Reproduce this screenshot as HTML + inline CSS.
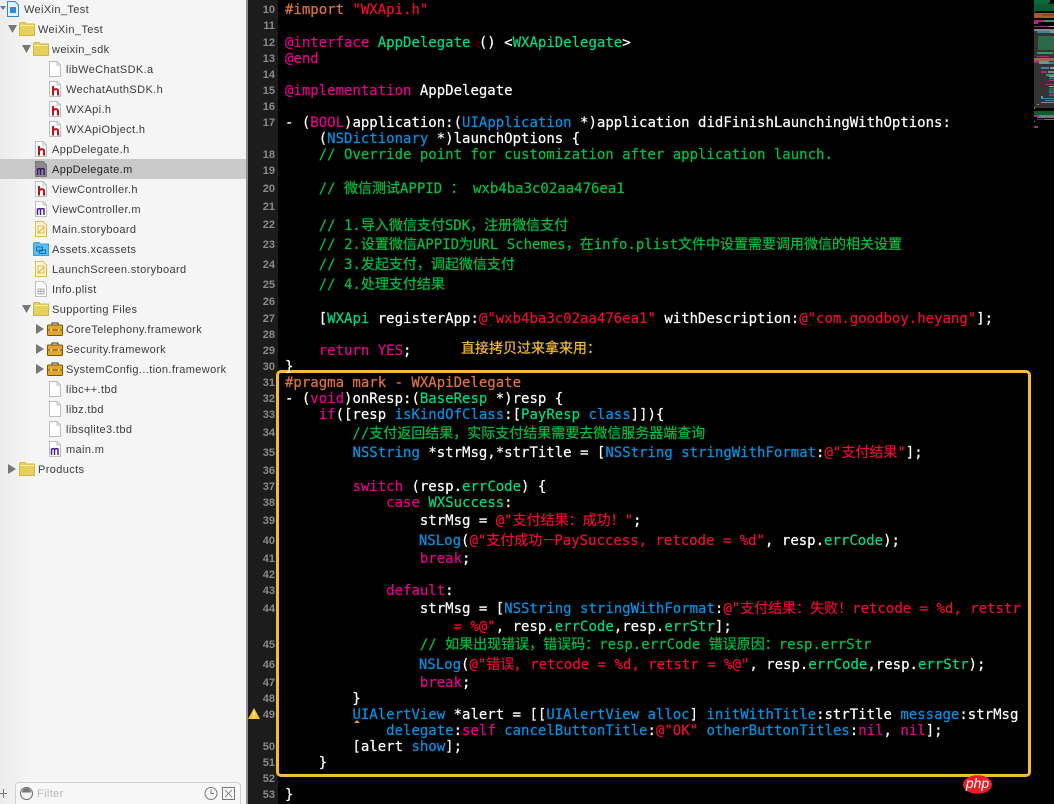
<!DOCTYPE html>
<html><head><meta charset="utf-8">
<style>
html,body{margin:0;padding:0;background:#000}
#p{position:relative;width:1054px;height:804px;overflow:hidden;background:#000}
#side{position:absolute;left:0;top:0;width:246px;height:804px;background:linear-gradient(90deg,#ececec 0,#f5f5f5 30px)}
#sel{position:absolute;left:0;top:159px;width:246px;height:20px;background:#c9c9c9}
#div{position:absolute;left:246px;top:0;width:2px;height:804px;background:#8f8f8f}
#gut{position:absolute;left:248px;top:0;width:30px;height:804px;background:#1c1c1c}
.r{position:absolute;margin-top:1px;font:11px/20px "Liberation Sans",sans-serif;letter-spacing:.37px;color:#3a3a3a;white-space:pre}
.n{position:absolute;margin-top:1px;left:248px;width:27px;text-align:right;font:bold 11px/14px "Liberation Sans",sans-serif;color:#8a8a8a}
.l{position:absolute;margin-top:1px;left:285px;font:14px/16px "DejaVu Sans Mono","Noto Sans CJK SC",monospace;color:#fff;white-space:pre;-webkit-text-stroke:.2px}
.k{color:#e4008c}.g{color:#00d97e}.b{color:#0094e6}.c{color:#00c040}.s{color:#f00a32}.o{color:#e0743c}
#box{position:absolute;left:276px;top:370px;width:749px;height:401px;border:3px solid #f5bd2e;border-radius:5px}
svg.a{position:absolute;overflow:visible}
</style></head><body><div id="p">
<div id="side"></div><div id="sel"></div><div id="div"></div><div id="gut"></div>

<svg width="0" height="0" style="position:absolute">
<defs>
<symbol id="fo" viewBox="0 0 16 14"><path d="M.5 2.500Q.5 .5 2 .5H6L7.500 2H15.500V13.500H.5Z" fill="#e6d05c" stroke="#d0b845"/><path d="M1 3H15V4H1Z" fill="#fff0a0"/></symbol>
<symbol id="fi" viewBox="0 0 12 16"><path d="M.5 .5H8L11.500 4V15.500H.5Z" fill="#fff" stroke="#bdbdbd"/><path d="M8 .5V4H11.500" fill="none" stroke="#bdbdbd"/></symbol>
<symbol id="fh" viewBox="0 0 12 16"><path d="M.5 .5H8L11.500 4V15.500H.5Z" fill="#fff" stroke="#bdbdbd"/><path d="M8 .5V4H11.500" fill="none" stroke="#bdbdbd"/><path d="M4 5V14.500M4 9.500Q5.500 8 7.500 8.200Q9 8.500 9 10V14.500" fill="none" stroke="#c0101c" stroke-width="2"/></symbol>
<symbol id="fm" viewBox="0 0 12 16"><path d="M.5 .5H8L11.500 4V15.500H.5Z" fill="#fff" stroke="#bdbdbd"/><path d="M8 .5V4H11.500" fill="none" stroke="#bdbdbd"/><path d="M2.500 7.500V14M2.500 8.500Q4 7 5.500 8V14M5.500 8.500Q7 7 9 8V14" fill="none" stroke="#4a1a90" stroke-width="1.500"/></symbol>
<symbol id="fmd" viewBox="0 0 12 16"><path d="M.5 .5H8L11.500 4V15.500H.5Z" fill="#8a8a8a" stroke="#777"/><path d="M2.500 7.500V14M2.500 8.500Q4 7 5.500 8V14M5.500 8.500Q7 7 9 8V14" fill="none" stroke="#3a1470" stroke-width="1.500"/></symbol>
<symbol id="fs" viewBox="0 0 12 16"><path d="M.5 .5H8L11.500 4V15.500H.5Z" fill="#fff8dc" stroke="#e3b84a"/><path d="M3 5H9V12H3Z" fill="none" stroke="#e5b53a"/><path d="M3 12L9 6" stroke="#e5a52a"/></symbol>
<symbol id="fp" viewBox="0 0 12 16"><path d="M.5 .5H8L11.500 4V15.500H.5Z" fill="#fff" stroke="#bdbdbd"/><path d="M3 8H9V13H3ZM3 10.500H9M6 8V13" fill="none" stroke="#aaa"/></symbol>
<symbol id="fw" viewBox="0 0 16 14"><path d="M5 3V1H11V3" fill="none" stroke="#3b2c14"/><rect x=".5" y="3" width="15" height="10.500" rx="1" fill="#e3a52a" stroke="#7a5210"/><path d="M1 8H15" stroke="#7a5210"/><path d="M3.500 7H5V9H3.500ZM11 7H12.500V9H11Z" fill="#ffe9a0"/></symbol>
<symbol id="fa" viewBox="0 0 16 14"><path d="M.5 2.500Q.5 .5 2 .5H6L7.500 2H15.500V13.500H.5Z" fill="#5ac0f2" stroke="#3aa0dc"/><path d="M3.500 5H9.500V9H3.500ZM6.500 8H12.500V11.500H6.500Z" fill="none" stroke="#136fae"/></symbol>
</defs></svg>

<!-- sidebar rows -->
<svg class="a" style="left:0;top:6px" width="6" height="6"><path d="M0 0H6L3 4Z" fill="#777"/></svg>
<svg class="a" style="left:7px;top:1px" width="12" height="16"><path d="M.5 .5H8L11.500 4V15.500H.5Z" fill="#e4f1fc" stroke="#2a8ae0"/><path d="M3 6H9V12H3Z" fill="#2a8ae0"/></svg>
<div class="r" style="left:24px;top:-1px">WeiXin_Test</div>

<svg class="a" style="left:8px;top:25px" width="9" height="8"><path d="M0 0H9L4.500 8Z" fill="#777"/></svg>
<svg class="a" style="left:19px;top:22px" width="16" height="14"><use href="#fo"/></svg>
<div class="r" style="left:38px;top:19px">WeiXin_Test</div>

<svg class="a" style="left:22px;top:45px" width="9" height="8"><path d="M0 0H9L4.500 8Z" fill="#777"/></svg>
<svg class="a" style="left:33px;top:42px" width="16" height="14"><use href="#fo"/></svg>
<div class="r" style="left:52px;top:39px">weixin_sdk</div>

<svg class="a" style="left:49px;top:61px" width="12" height="16"><use href="#fi"/></svg>
<div class="r" style="left:66px;top:59px">libWeChatSDK.a</div>
<svg class="a" style="left:49px;top:81px" width="12" height="16"><use href="#fh"/></svg>
<div class="r" style="left:66px;top:79px">WechatAuthSDK.h</div>
<svg class="a" style="left:49px;top:101px" width="12" height="16"><use href="#fh"/></svg>
<div class="r" style="left:66px;top:99px">WXApi.h</div>
<svg class="a" style="left:49px;top:121px" width="12" height="16"><use href="#fh"/></svg>
<div class="r" style="left:66px;top:119px">WXApiObject.h</div>

<svg class="a" style="left:35px;top:141px" width="12" height="16"><use href="#fh"/></svg>
<div class="r" style="left:52px;top:139px">AppDelegate.h</div>
<svg class="a" style="left:35px;top:161px" width="12" height="16"><use href="#fmd"/></svg>
<div class="r" style="left:52px;top:159px;color:#222">AppDelegate.m</div>
<svg class="a" style="left:35px;top:181px" width="12" height="16"><use href="#fh"/></svg>
<div class="r" style="left:52px;top:179px">ViewController.h</div>
<svg class="a" style="left:35px;top:201px" width="12" height="16"><use href="#fm"/></svg>
<div class="r" style="left:52px;top:199px">ViewController.m</div>
<svg class="a" style="left:35px;top:221px" width="12" height="16"><use href="#fs"/></svg>
<div class="r" style="left:52px;top:219px">Main.storyboard</div>
<svg class="a" style="left:33px;top:242px" width="16" height="14"><use href="#fa"/></svg>
<div class="r" style="left:52px;top:239px">Assets.xcassets</div>
<svg class="a" style="left:35px;top:261px" width="12" height="16"><use href="#fs"/></svg>
<div class="r" style="left:52px;top:259px">LaunchScreen.storyboard</div>
<svg class="a" style="left:35px;top:281px" width="12" height="16"><use href="#fp"/></svg>
<div class="r" style="left:52px;top:279px">Info.plist</div>

<svg class="a" style="left:22px;top:305px" width="9" height="8"><path d="M0 0H9L4.500 8Z" fill="#777"/></svg>
<svg class="a" style="left:33px;top:302px" width="16" height="14"><use href="#fo"/></svg>
<div class="r" style="left:52px;top:299px">Supporting Files</div>

<svg class="a" style="left:36px;top:324px" width="8" height="10"><path d="M0 0L8 5L0 10Z" fill="#777"/></svg>
<svg class="a" style="left:47px;top:322px" width="16" height="14"><use href="#fw"/></svg>
<div class="r" style="left:66px;top:319px">CoreTelephony.framework</div>
<svg class="a" style="left:36px;top:344px" width="8" height="10"><path d="M0 0L8 5L0 10Z" fill="#777"/></svg>
<svg class="a" style="left:47px;top:342px" width="16" height="14"><use href="#fw"/></svg>
<div class="r" style="left:66px;top:339px">Security.framework</div>
<svg class="a" style="left:36px;top:364px" width="8" height="10"><path d="M0 0L8 5L0 10Z" fill="#777"/></svg>
<svg class="a" style="left:47px;top:362px" width="16" height="14"><use href="#fw"/></svg>
<div class="r" style="left:66px;top:359px">SystemConfig...tion.framework</div>

<svg class="a" style="left:49px;top:381px" width="12" height="16"><use href="#fi"/></svg>
<div class="r" style="left:66px;top:379px">libc++.tbd</div>
<svg class="a" style="left:49px;top:401px" width="12" height="16"><use href="#fi"/></svg>
<div class="r" style="left:66px;top:399px">libz.tbd</div>
<svg class="a" style="left:49px;top:421px" width="12" height="16"><use href="#fi"/></svg>
<div class="r" style="left:66px;top:419px">libsqlite3.tbd</div>
<svg class="a" style="left:49px;top:441px" width="12" height="16"><use href="#fm"/></svg>
<div class="r" style="left:66px;top:439px">main.m</div>

<svg class="a" style="left:8px;top:464px" width="8" height="10"><path d="M0 0L8 5L0 10Z" fill="#777"/></svg>
<svg class="a" style="left:19px;top:462px" width="16" height="14"><use href="#fo"/></svg>
<div class="r" style="left:38px;top:459px">Products</div>

<!-- filter bar -->
<svg class="a" style="left:0;top:783px" width="246" height="21">
<path d="M0 10.500H7M3.500 6V15" stroke="#777" fill="none"/>
<rect x="15.500" y="-.5" width="225" height="25" rx="3" fill="#f7f7f7" stroke="#cfcfcf"/>
<circle cx="26.500" cy="10.500" r="6" fill="#f7f7f7" stroke="#777" stroke-width="1.200"/>
<path d="M22 9.500A4.500 4.500 0 0 1 31 9.500Z" fill="#777"/>
<circle cx="211" cy="10.500" r="6" fill="none" stroke="#777"/>
<path d="M211 6.500V10.500H214" fill="none" stroke="#777"/>
<rect x="222.500" y="4.500" width="12" height="12" fill="none" stroke="#777"/>
<path d="M225 7L232 14M232 7L225 14" stroke="#888"/>
</svg>
<div class="r" style="left:37px;top:783px;color:#b5b5b5">Filter</div>

<!-- gutter numbers -->
<div class="n" style="top:2px">10</div><div class="n" style="top:18px">11</div><div class="n" style="top:35px">12</div><div class="n" style="top:51px">13</div><div class="n" style="top:67px">14</div><div class="n" style="top:83px">15</div><div class="n" style="top:99px">16</div><div class="n" style="top:115px">17</div><div class="n" style="top:147px">18</div><div class="n" style="top:163px">19</div><div class="n" style="top:181px">20</div><div class="n" style="top:199px">21</div><div class="n" style="top:217px">22</div><div class="n" style="top:237px">23</div><div class="n" style="top:257px">24</div><div class="n" style="top:277px">25</div><div class="n" style="top:294px">26</div><div class="n" style="top:311px">27</div><div class="n" style="top:327px">28</div><div class="n" style="top:343px">29</div><div class="n" style="top:359px">30</div><div class="n" style="top:375px">31</div><div class="n" style="top:391px">32</div><div class="n" style="top:407px">33</div><div class="n" style="top:425px">34</div><div class="n" style="top:445px">35</div><div class="n" style="top:463px">36</div><div class="n" style="top:479px">37</div><div class="n" style="top:495px">38</div><div class="n" style="top:513px">39</div><div class="n" style="top:533px">40</div><div class="n" style="top:551px">41</div><div class="n" style="top:567px">42</div><div class="n" style="top:583px">43</div><div class="n" style="top:601px">44</div><div class="n" style="top:637px">45</div><div class="n" style="top:657px">46</div><div class="n" style="top:675px">47</div><div class="n" style="top:691px">48</div><div class="n" style="top:707px">49</div><div class="n" style="top:739px">50</div><div class="n" style="top:755px">51</div><div class="n" style="top:771px">52</div><div class="n" style="top:787px">53</div>
<svg class="a" style="left:248px;top:708px" width="12" height="11"><path d="M6 0L12 11H0Z" fill="#f7c325"/><path d="M6 3.500V7.500M6 8.500V10" stroke="#fff" stroke-width="1.200"/></svg>

<div id="box"></div>

<!-- code -->
<div class="l" style="top:1px"><span class="o">#import </span><span class="s">"WXApi.h"</span></div>
<div class="l" style="top:34px"><span class="k">@interface</span> <span class="g">AppDelegate</span> () &lt;<span class="g">WXApiDelegate</span>&gt;</div>
<div class="l" style="top:50px"><span class="k">@end</span></div>
<div class="l" style="top:82px"><span class="k">@implementation</span> AppDelegate</div>
<div class="l" style="top:114px">- (<span class="k">BOOL</span>)application:(<span class="b">UIApplication</span> *)application didFinishLaunchingWithOptions:</div>
<div class="l" style="top:130px">    (<span class="b">NSDictionary</span> *)launchOptions {</div>
<div class="l c" style="top:146px">    // Override point for customization after application launch.</div>
<div class="l c" style="top:180px">    // 微信测试APPID ： wxb4ba3c02aa476ea1</div>
<div class="l c" style="top:217px">    // 1.导入微信支付SDK，注册微信支付</div>
<div class="l c" style="top:236px">    // 2.设置微信APPID为URL Schemes，在info.plist文件中设置需要调用微信的相关设置</div>
<div class="l c" style="top:256px">    // 3.发起支付，调起微信支付</div>
<div class="l c" style="top:276px">    // 4.处理支付结果</div>
<div class="l" style="top:310px">    [<span class="g">WXApi</span> registerApp:<span class="s">@"wxb4ba3c02aa476ea1"</span> withDescription:<span class="s">@"com.goodboy.heyang"</span>];</div>
<div class="l" style="top:342px">    <span class="k">return</span> <span class="k">YES</span>;</div>
<div class="l" style="top:339px;left:461px;color:#f5bd2e;font-family:'Liberation Sans','Noto Sans CJK SC',sans-serif">直接拷贝过来拿来用：</div>
<div class="l" style="top:358px">}</div>
<div class="l" style="top:374px"><span class="o">#pragma mark - WXApiDelegate</span></div>
<div class="l" style="top:390px">- (<span class="k">void</span>)onResp:(<span class="g">BaseResp</span> *)resp {</div>
<div class="l" style="top:406px">    <span class="k">if</span>([resp <span class="b">isKindOfClass</span>:[<span class="g">PayResp</span> <span class="b">class</span>]]){</div>
<div class="l c" style="top:425px">        //支付返回结果，实际支付结果需要去微信服务器端查询</div>
<div class="l" style="top:444px">        <span class="b">NSString</span> *strMsg,*strTitle = [<span class="b">NSString</span> <span class="b">stringWithFormat</span>:<span class="s">@"支付结果"</span>];</div>
<div class="l" style="top:478px">        <span class="k">switch</span> (resp.<span class="g">errCode</span>) {</div>
<div class="l" style="top:494px">            <span class="k">case</span> <span class="g">WXSuccess</span>:</div>
<div class="l" style="top:512px">                strMsg = <span class="s">@"支付结果：成功！"</span>;</div>
<div class="l" style="top:532px;left:284px">                <span class="b">NSLog</span>(<span class="s">@"支付成功－<span style="margin-left:-2px">PaySuccess, retcode = %d"</span></span>, resp.<span class="g">errCode</span>);</div>
<div class="l" style="top:550px">                <span class="k">break</span>;</div>
<div class="l" style="top:582px">            <span class="k">default</span>:</div>
<div class="l" style="top:600px">                strMsg = [<span class="b">NSString</span> <span class="b">stringWithFormat</span>:<span class="s">@"支付结果：失败！retcode = %d, retstr</span></div>
<div class="l" style="top:618px">                    <span class="s">= %@"</span>, resp.<span class="g">errCode</span>,resp.<span class="g">errStr</span>];</div>
<div class="l c" style="top:636px">                // 如果出现错误，错误码：resp.errCode 错误原因：resp.errStr</div>
<div class="l" style="top:656px;left:284px">                <span class="b">NSLog</span>(<span class="s">@"错误<span style="margin-left:-1px">, retcode = %d, retstr = %@"</span></span>, resp.<span class="g">errCode</span>,resp.<span class="g">errStr</span>);</div>
<div class="l" style="top:674px">                <span class="k">break</span>;</div>
<div class="l" style="top:690px">        }</div>
<div class="l" style="top:706px">        <span class="b">UIAlertView</span> *alert = [[<span class="b">UIAlertView</span> <span class="b">alloc</span>] <span class="b">initWithTitle</span>:strTitle <span class="b">message</span>:strMsg</div>
<div class="l" style="top:722px">            <span class="b">delegate</span>:<span class="k">self</span> <span class="b">cancelButtonTitle</span>:<span class="s">@"OK"</span> <span class="b">otherButtonTitles</span>:<span class="k">nil</span>, <span class="k">nil</span>];</div>
<div class="l" style="top:738px">        [alert <span class="b">show</span>];</div>
<div class="l" style="top:754px">    }</div>
<div class="l" style="top:786px">}</div>

<svg class="a" style="left:354px;top:720px" width="6" height="3"><path d="M0 3L3 0L6 3Z" fill="#e0a030"/></svg>

<!-- minimap -->
<svg class="a" style="left:1034px;top:0" width="20" height="135" shape-rendering="crispEdges">
<rect y="0" width="16" height="3" fill="#0b6a35"/><rect y="3" width="14" height="1" fill="#0b6a35"/>
<rect y="4" width="20" height="7" fill="#0d5c30"/><rect y="11" width="2" height="1" fill="#0d5c30"/>
<rect y="13" width="20" height="5" fill="#a45a35"/><rect x="8" y="14" width="12" height="2" fill="#a43c30"/>
<rect y="29" width="20" height="79" fill="#333"/>
<rect y="20" width="10" height="2" fill="#a52a80"/><rect x="10" y="20" width="10" height="2" fill="#2e9a6a"/>
<rect y="22" width="4" height="2" fill="#a52a80"/>
<rect y="26" width="15" height="1" fill="#a52a80"/><rect x="15" y="26" width="5" height="1" fill="#aaa"/>
<rect y="29" width="20" height="2" fill="#888"/><rect x="3" y="31" width="13" height="2" fill="#2a8aa8"/><rect x="16" y="31" width="4" height="2" fill="#999"/>
<rect x="4" y="36" width="16" height="14" fill="#2a6a48"/>
<rect x="3" y="52" width="16" height="2" fill="#2e9a6a"/>
<rect x="3" y="56" width="12" height="1" fill="#a52a80"/>
<rect y="58" width="20" height="3" fill="#a4654a"/>
<rect y="61" width="6" height="2" fill="#a52a80"/><rect x="5" y="61" width="10" height="3" fill="#888"/><rect x="15" y="62" width="5" height="2" fill="#2a8aa8"/>
<rect x="7" y="67" width="8" height="2" fill="#2a8aa8"/><rect x="16" y="67" width="4" height="2" fill="#999"/>
<rect x="7" y="71" width="6" height="2" fill="#a52a80"/><rect x="14" y="71" width="6" height="2" fill="#888"/>
<rect x="12" y="74" width="8" height="2" fill="#2e9a6a"/><rect x="15" y="76" width="5" height="1" fill="#aaa"/>
<rect x="15" y="78" width="5" height="1" fill="#2a8aa8"/><rect x="15" y="80" width="5" height="1" fill="#a52a80"/>
<rect x="11" y="84" width="9" height="1" fill="#a52a80"/><rect x="15" y="86" width="5" height="1" fill="#aaa"/>
<rect x="15" y="88" width="5" height="4" fill="#2a6a48"/><rect x="15" y="92" width="5" height="1" fill="#2a8aa8"/><rect x="15" y="94" width="5" height="2" fill="#a52a80"/>
<rect x="7" y="96" width="2" height="2" fill="#888"/><rect x="7" y="98" width="13" height="1" fill="#2a8aa8"/><rect x="11" y="100" width="9" height="1" fill="#2a8aa8"/>
<rect x="7" y="102" width="13" height="1" fill="#888"/><rect x="3" y="104" width="2" height="1" fill="#888"/>
<rect y="107" width="1" height="2" fill="#a08040"/>
<rect y="111" width="20" height="4" fill="#0d5c30"/>
<rect y="115" width="5" height="2" fill="#a52a80"/><rect x="5" y="115" width="15" height="2" fill="#777"/>
<rect x="3" y="117" width="7" height="1" fill="#2a8aa8"/><rect x="10" y="117" width="10" height="1" fill="#777"/>
<rect x="3" y="119" width="6" height="1" fill="#5a2a80"/><rect x="10" y="119" width="10" height="1" fill="#2e9a6a"/>
<rect y="121" width="1" height="1" fill="#a08040"/>
<rect y="126" width="4" height="2" fill="#a52a80"/>
</svg>

<!-- php badge -->
<svg class="a" style="left:963px;top:775px" width="29" height="19"><ellipse cx="14.500" cy="9.500" rx="14.500" ry="9.300" fill="#e8202a"/><text x="14.500" y="13" text-anchor="middle" font-family="Liberation Sans,sans-serif" font-style="italic" font-size="14" fill="#fff">php</text></svg>
</div></body></html>
